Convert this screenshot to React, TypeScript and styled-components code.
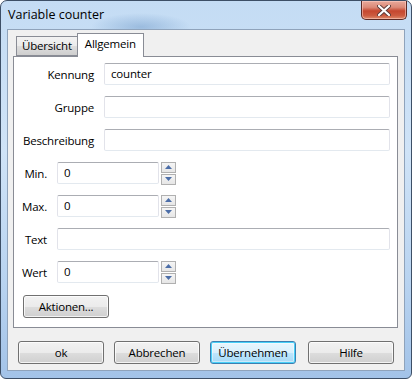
import * as React from 'react';
import styled, { createGlobalStyle } from 'styled-components';

const GlobalStyle = createGlobalStyle`
  html, body {
    margin: 0;
    padding: 0;
    background: #ffffff;
  }
  body {
    font-family: "Segoe UI", "Open Sans", "Noto Sans", sans-serif;
    font-size: 11.5px;
    letter-spacing: -0.2px;
    color: #000;
  }
`;

const Window = styled.div`
  box-sizing: border-box;
  width: 412px;
  height: 379px;
  border: 1px solid #3d4f66;
  border-radius: 7px 7px 6px 6px;
  background:
    radial-gradient(ellipse 50px 14px at 140px 26px, rgba(120, 160, 205, 0.55), rgba(120, 160, 205, 0) 100%),
    linear-gradient(180deg, #c4dcf4 0%, #cfe3f7 40%, #b8d3f0 75%, #a3c3e8 100%);
  padding: 0 6px 7px 6px;
  display: flex;
  flex-direction: column;
`;

const TitleBar = styled.div`
  height: 28px;
  display: flex;
  align-items: flex-start;
  justify-content: space-between;
`;

const Title = styled.div`
  padding: 5px 0 0 1px;
  font-size: 12.5px;
  letter-spacing: 0;
  color: #000;
`;

const CloseButton = styled.div`
  box-sizing: border-box;
  width: 46px;
  height: 19px;
  margin-right: -2px;
  border: 1px solid #5b2a25;
  border-top: none;
  border-radius: 0 0 5px 5px;
  background: linear-gradient(180deg, #e9a99b 0%, #dc8a78 35%, #c5472f 55%, #cc5a3f 80%, #dd8a6a 100%);
  box-shadow: inset 0 0 0 1px rgba(255, 210, 200, 0.55);
  display: flex;
  align-items: center;
  justify-content: center;
`;

const Client = styled.div`
  flex: 1;
  box-sizing: border-box;
  border: 1px solid #8fa3bb;
  background: #f0f0f0;
  padding: 4px 6px 0 5px;
  display: flex;
  flex-direction: column;
`;

const TabStrip = styled.div`
  display: flex;
  align-items: flex-end;
  height: 23px;
  padding-left: 3px;
  position: relative;
  z-index: 1;
  margin-bottom: -1px;
`;

const Tab = styled.div<{ $active?: boolean }>`
  box-sizing: border-box;
  height: ${({ $active }) => ($active ? '24px' : '20px')};
  margin-bottom: ${({ $active }) => ($active ? '0' : '1px')};
  padding: ${({ $active }) => ($active ? '2px 7px 0 7px' : '1px 5px 0 5px')};
  border: 1px solid #898c95;
  border-bottom: ${({ $active }) => ($active ? 'none' : '1px solid #898c95')};
  margin-left: ${({ $active }) => ($active ? '-1px' : '0')};
  background: ${({ $active }) =>
    $active ? '#ffffff' : 'linear-gradient(180deg, #f2f2f2 0%, #ebebeb 50%, #dddddd 51%, #cfcfcf 100%)'};
  white-space: nowrap;
`;

const Panel = styled.div`
  box-sizing: border-box;
  height: 272px;
  border: 1px solid #898c95;
  background: #ffffff;
  padding: 6px 7px 0 0;
  display: flex;
  flex-direction: column;
`;

const Row = styled.div`
  display: flex;
  align-items: center;
  height: 22px;
  margin-bottom: 11px;
`;

const Label = styled.div<{ $wide?: boolean }>`
  width: ${({ $wide }) => ($wide ? '80px' : '33px')};
  margin-right: 10px;
  text-align: right;
  white-space: nowrap;
`;

const Field = styled.div<{ $small?: boolean }>`
  box-sizing: border-box;
  height: 22px;
  ${({ $small }) => ($small ? 'width: 102px;' : 'flex: 1;')}
  border: 1px solid #e2e3ea;
  border-top-color: #abadb3;
  border-bottom-color: #e3e9ef;
  border-radius: 2px;
  background: #fff;
  padding: 2px 0 0 6px;
  white-space: nowrap;
`;

const Spinner = styled.div`
  display: flex;
  flex-direction: column;
  gap: 1px;
  margin-left: 2px;
`;

const SpinButton = styled.div`
  box-sizing: border-box;
  width: 15px;
  height: 11px;
  border: 1px solid #b0b0b0;
  background: linear-gradient(180deg, #f5f5f5 0%, #e6e6e6 100%);
  display: flex;
  align-items: center;
  justify-content: center;
`;

const Button = styled.div<{ $default?: boolean }>`
  box-sizing: border-box;
  width: 86px;
  height: 23px;
  border: 1px solid ${({ $default }) => ($default ? '#3c7fb1' : '#707070')};
  border-radius: 3px;
  background: ${({ $default }) =>
    $default
      ? 'linear-gradient(180deg, #eaf6fd 0%, #d9f0fc 50%, #bee6fd 51%, #a7d9f5 100%)'
      : 'linear-gradient(180deg, #f2f2f2 0%, #ebebeb 50%, #dddddd 51%, #cfcfcf 100%)'};
  box-shadow: ${({ $default }) =>
    $default ? 'inset 0 0 0 1px #48d0f8, inset 0 0 0 2px rgba(255,255,255,0.4)' : 'inset 0 0 0 1px rgba(255,255,255,0.75)'};
  display: flex;
  align-items: center;
  justify-content: center;
  white-space: nowrap;
`;

const ActionRow = styled.div`
  padding-left: 9px;
  margin-top: 1px;
`;

const ButtonBar = styled.div`
  display: flex;
  gap: 10px;
  padding: 13px 0 0 5px;

  & > :last-child {
    margin-left: 2px;
  }
`;

const Arrow = ({ up }: { up?: boolean }) => (
  <svg width="7" height="4" viewBox="0 0 7 4">
    <path d={up ? 'M0 4 L3.5 0 L7 4 Z' : 'M0 0 L7 0 L3.5 4 Z'} fill="#4c6ea8" />
  </svg>
);

const SpinBox = () => (
  <Spinner>
    <SpinButton>
      <Arrow up />
    </SpinButton>
    <SpinButton>
      <Arrow />
    </SpinButton>
  </Spinner>
);

export default function App() {
  return (
    <>
      <GlobalStyle />
      <Window>
        <TitleBar>
          <Title>Variable counter</Title>
          <CloseButton>
            <svg width="14" height="11" viewBox="0 0 14 11">
              <path d="M2 1 L12 10 M12 1 L2 10" stroke="#5a3a38" strokeWidth="4" strokeLinecap="round" />
              <path d="M2 1 L12 10 M12 1 L2 10" stroke="#ffffff" strokeWidth="2.2" strokeLinecap="round" />
            </svg>
          </CloseButton>
        </TitleBar>
        <Client>
          <TabStrip>
            <Tab>Übersicht</Tab>
            <Tab $active>Allgemein</Tab>
          </TabStrip>
          <Panel>
            <Row>
              <Label $wide>Kennung</Label>
              <Field>counter</Field>
            </Row>
            <Row>
              <Label $wide>Gruppe</Label>
              <Field />
            </Row>
            <Row>
              <Label $wide>Beschreibung</Label>
              <Field />
            </Row>
            <Row>
              <Label>Min.</Label>
              <Field $small>0</Field>
              <SpinBox />
            </Row>
            <Row>
              <Label>Max.</Label>
              <Field $small>0</Field>
              <SpinBox />
            </Row>
            <Row>
              <Label>Text</Label>
              <Field />
            </Row>
            <Row>
              <Label>Wert</Label>
              <Field $small>0</Field>
              <SpinBox />
            </Row>
            <ActionRow>
              <Button>Aktionen...</Button>
            </ActionRow>
          </Panel>
          <ButtonBar>
            <Button>ok</Button>
            <Button>Abbrechen</Button>
            <Button $default>Übernehmen</Button>
            <Button>Hilfe</Button>
          </ButtonBar>
        </Client>
      </Window>
    </>
  );
}
